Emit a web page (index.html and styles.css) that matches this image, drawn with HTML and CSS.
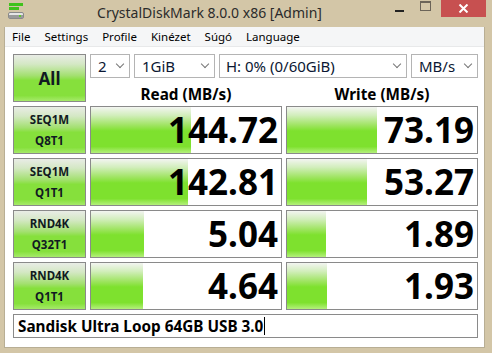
FILE: index.html
```html
<!DOCTYPE html>
<html lang="en">
<head>
    <meta charset="UTF-8">
    <title>CrystalDiskMark 8.0.0 x86 [Admin]</title>
    <link rel="stylesheet" href="styles.css">
</head>
<body>
    <div class="window">
        <div class="titlebar">
            <svg class="app-icon" width="18" height="18" viewBox="0 0 18 18">
                <rect x="2" y="1" width="14" height="3" fill="#3fc21c"/>
                <rect x="2" y="5" width="10" height="3" fill="#3fc21c"/>
                <rect x="1.5" y="10.5" width="15" height="6" rx="1.5" fill="#e6e6e6" stroke="#8a8a8a"/>
                <rect x="2" y="13" width="14" height="3" fill="#9a9a9a"/>
                <rect x="12" y="13" width="2" height="2" fill="#5ecb2c"/>
            </svg>
            <div class="title">CrystalDiskMark 8.0.0 x86 [Admin]</div>
            <div class="controls">
                <span class="ctl ctl-min"><i></i></span>
                <span class="ctl ctl-max"><i></i></span>
                <span class="ctl ctl-close">
                    <svg width="11" height="9" viewBox="0 0 11 9">
                        <path d="M1.5 0.5 L9.5 8.5 M9.5 0.5 L1.5 8.5" stroke="#fff" stroke-width="2"/>
                    </svg>
                </span>
            </div>
        </div>

        <div class="client">
            <div class="menubar">
                <span>File</span>
                <span>Settings</span>
                <span>Profile</span>
                <span>Kinézet</span>
                <span>Súgó</span>
                <span>Language</span>
            </div>

            <div class="main">
                <div class="board">
                    <div class="btn btn-all">All</div>
                    <div class="top">
                        <div class="selects">
                            <div class="select sel-count"><span>2</span><b class="chev"></b></div>
                            <div class="select sel-size"><span>1GiB</span><b class="chev"></b></div>
                            <div class="select sel-drive"><span>H: 0% (0/60GiB)</span><b class="chev"></b></div>
                            <div class="select sel-unit"><span>MB/s</span><b class="chev"></b></div>
                        </div>
                        <div class="heads">
                            <div>Read (MB/s)</div>
                            <div>Write (MB/s)</div>
                        </div>
                    </div>

                    <div class="btn">SEQ1M<br>Q8T1</div>
                    <div class="cell"><div class="bar" style="width:100px"></div><div class="val">144.72</div></div>
                    <div class="cell"><div class="bar" style="width:90px"></div><div class="val">73.19</div></div>

                    <div class="btn">SEQ1M<br>Q1T1</div>
                    <div class="cell"><div class="bar" style="width:97px"></div><div class="val">142.81</div></div>
                    <div class="cell"><div class="bar" style="width:80px"></div><div class="val">53.27</div></div>

                    <div class="btn">RND4K<br>Q32T1</div>
                    <div class="cell"><div class="bar" style="width:53px"></div><div class="val">5.04</div></div>
                    <div class="cell"><div class="bar" style="width:39px"></div><div class="val">1.89</div></div>

                    <div class="btn">RND4K<br>Q1T1</div>
                    <div class="cell"><div class="bar" style="width:52px"></div><div class="val">4.64</div></div>
                    <div class="cell"><div class="bar" style="width:40px"></div><div class="val">1.93</div></div>

                    <div class="comment">Sandisk Ultra Loop 64GB USB 3.0<span class="caret"></span></div>
                </div>
            </div>
        </div>
    </div>
</body>
</html>
```

FILE: styles.css
```css
html, body {
    margin: 0;
    height: 100%;
}
body {
    background-color: #d3c6a7;
    font-family: 'Noto Sans', 'Open Sans', sans-serif;
    color: #000;
}
.window {
    height: 353px;
    display: flex;
    flex-direction: column;
}
.titlebar {
    height: 27px;
    flex-shrink: 0;
    display: flex;
    align-items: flex-start;
}
.app-icon {
    margin: 2px 0 0 7px;
}
.title {
    flex: 1;
    text-align: center;
    font-size: 14px;
    line-height: 20px;
    margin-top: 3px;
    margin-left: 8px;
    color: #2b2b2b;
}
.controls {
    display: flex;
    align-items: flex-start;
    margin-right: 6px;
}
.ctl {
    display: flex;
    align-items: center;
    justify-content: center;
    height: 18px;
}
.ctl-min {
    width: 26px;
}
.ctl-min i {
    width: 9px;
    height: 2px;
    background: #222;
    margin-top: 3px;
}
.ctl-max {
    width: 26px;
    margin-right: 3px;
}
.ctl-max i {
    width: 9px;
    height: 7px;
    border: 1px solid #6b6458;
    border-top-width: 2px;
    margin-top: -7px;
}
.ctl-close {
    width: 45px;
    height: 17px;
    background: #c75050;
}
.client {
    flex: 1;
    min-height: 0;
    margin: 0 7px 5px 4px;
    background: #fff;
    border: 1px solid #b8ae94;
    border-top: none;
    display: flex;
    flex-direction: column;
}
.menubar {
    height: 19px;
    flex-shrink: 0;
    background: #f5f6f7;
    border-bottom: 1px solid #e8e9ea;
    display: flex;
    font-size: 11.5px;
    line-height: 20px;
    color: #000;
}
.menubar span {
    padding: 0 7px;
}
.main {
    padding: 7px 0 0 8px;
}
.board {
    display: grid;
    grid-template-columns: 73px 192px 192px;
    grid-template-rows: repeat(5, 48px) 24px;
    gap: 4px;
}
.btn {
    border: 1px solid #8a8a8a;
    background: linear-gradient(to bottom, #e9ece6 0%, #d4e8c4 20%, #a3e070 45%, #86e03c 55%, #86e03c 88%, #a6ea6a 100%);
    display: flex;
    align-items: center;
    justify-content: center;
    text-align: center;
    font-weight: bold;
    font-size: 11.5px;
    line-height: 21px;
    color: #111a22;
}
.btn-all {
    font-size: 17px;
}
.top {
    grid-column: 2 / 4;
    display: flex;
    flex-direction: column;
}
.selects {
    display: flex;
    gap: 4px;
    height: 24px;
}
.select {
    border: 1px solid #b4b4b4;
    background: #fff;
    display: flex;
    align-items: center;
    justify-content: space-between;
    padding: 0 6px 0 7px;
    font-size: 15px;
    color: #0b1733;
}
.sel-count { width: 40px; }
.sel-size { width: 81px; }
.sel-drive { width: 188px; padding-left: 6px; }
.sel-unit { width: 67px; }
.select, .cell, .btn, .comment {
    box-sizing: border-box;
}
.chev {
    width: 5px;
    height: 5px;
    border-right: 1.5px solid #777;
    border-bottom: 1.5px solid #777;
    transform: rotate(45deg);
    margin-top: -4px;
}
.heads {
    flex: 1;
    display: grid;
    grid-template-columns: 192px 192px;
    gap: 4px;
    align-items: end;
    text-align: center;
    font-weight: bold;
    font-size: 15.3px;
    line-height: 16px;
}
.cell {
    border: 1px solid #8a8a8a;
    background: #fff;
    display: grid;
}
.bar, .val {
    grid-area: 1 / 1;
}
.bar {
    justify-self: start;
    background: linear-gradient(to bottom, #f3f5f1 0%, #d2eebc 18%, #9ee460 40%, #7ee12e 52%, #7ee12e 86%, #b4f07c 100%);
}
.val {
    justify-self: end;
    align-self: center;
    font-weight: bold;
    font-size: 35px;
    line-height: 40px;
    padding-right: 3px;
}
.comment {
    grid-column: 1 / 4;
    border: 1px solid #8a8a8a;
    display: flex;
    align-items: center;
    padding-left: 4px;
    font-weight: bold;
    font-size: 15.3px;
}
.caret {
    width: 1px;
    height: 18px;
    background: #000;
    margin-left: 1px;
}
```
